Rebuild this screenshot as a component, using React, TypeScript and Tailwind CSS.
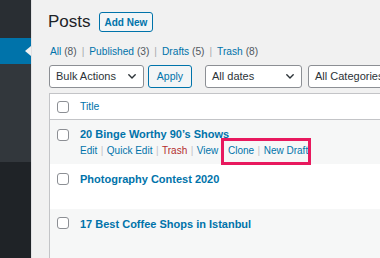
import React from "react";

const Checkbox = () => (
  <span className="block w-[12px] h-[12px] shrink-0 rounded-[3px] border border-[#8c8f94] bg-white" />
);

const Chevron = () => (
  <svg width="8" height="5" viewBox="0 0 8 5" className="shrink-0">
    <path d="M0.8 0.8 L4 4 L7.2 0.8" fill="none" stroke="#2c3338" strokeWidth="1.4" strokeLinecap="round" strokeLinejoin="round" />
  </svg>
);

const Select = ({ label, w, chevron = true }: { label: string; w: string; chevron?: boolean }) => (
  <div className={`${w} h-[23px] shrink-0 flex items-center justify-between pl-[6px] pr-[7px] border border-[#8c8f94] rounded-[3px] bg-white text-[11px] text-[#2c3338] whitespace-nowrap overflow-hidden`}>
    <span>{label}</span>
    {chevron && <Chevron />}
  </div>
);

const Sep = () => <span className="text-[#c3c4c7] mx-[3.5px]">|</span>;
const LinkSep = () => <span className="text-[#a7aaad] mx-[5px]">|</span>;

export default function App() {
  return (
    <div className="w-[380px] h-[258px] overflow-hidden flex bg-[#f1f1f1] font-['Liberation_Sans',Arial,sans-serif]">
      {/* Sidebar */}
      <div className="w-[31px] shrink-0 flex flex-col">
        <div className="h-[38px] bg-[#292e33]" />
        <div className="h-[26px] bg-[#0073aa] relative">
          <span className="absolute right-0 top-[8px] w-0 h-0 border-y-[5px] border-y-transparent border-r-[6px] border-r-[#f1f1f1]" />
        </div>
        <div className="h-[98px] bg-[#32373c]" />
        <div className="flex-1 bg-[#1f2327]" />
      </div>
      <div className="w-px shrink-0 bg-[#e2e2e4]" />

      {/* Main */}
      <div className="flex-1 pl-[17px] pt-[10px] flex flex-col min-w-0">
        <div className="h-[24px] flex items-center">
          <span className="text-[17px] leading-[24px] text-[#1d2327] -ml-[1px]">Posts</span>
          <span className="ml-[8px] h-[20px] px-[5px] flex items-center border border-[#0073aa] rounded-[3px] bg-[#f3f5f6] text-[10px] font-bold text-[#0073aa]">
            Add New
          </span>
        </div>

        <div className="mt-[11px] h-[14px] text-[10.2px] leading-[14px] whitespace-nowrap pl-[1px]">
          <span className="text-[#0073aa]">All</span> <span className="text-[#50575e]">(8)</span>
          <LinkSep />
          <span className="text-[#0073aa]">Published</span> <span className="text-[#50575e]">(3)</span>
          <LinkSep />
          <span className="text-[#0073aa]">Drafts</span> <span className="text-[#50575e]">(5)</span>
          <LinkSep />
          <span className="text-[#0073aa]">Trash</span> <span className="text-[#50575e]">(8)</span>
        </div>

        <div className="mt-[6px] flex items-center">
          <Select label="Bulk Actions" w="w-[95px]" />
          <div className="ml-[4px] w-[44px] h-[23px] shrink-0 flex items-center justify-center border border-[#0073aa] rounded-[3px] bg-[#f3f5f6] text-[10.5px] text-[#0073aa]">
            Apply
          </div>
          <div className="ml-[13px]">
            <Select label="All dates" w="w-[97px]" />
          </div>
          <div className="ml-[6px]">
            <Select label="All Categories" w="w-[110px]" chevron={false} />
          </div>
        </div>

        {/* Table */}
        <div className="mt-[5px] w-[400px] border border-[#c3c4c7] bg-white">
          <div className="h-[26px] flex items-center pl-[7px] border-b border-[#c3c4c7]">
            <Checkbox />
            <span className="ml-[11px] text-[10.5px] text-[#0073aa]">Title</span>
          </div>

          <div className="relative h-[44px] bg-[#f6f7f7] flex pl-[7px]">
            <div className="pt-[9px]"><Checkbox /></div>
            <div className="ml-[11px] pt-[7px]">
              <div className="text-[11px] leading-[14px] font-bold text-[#0073aa] whitespace-nowrap">20 Binge Worthy 90’s Shows</div>
              <div className="mt-[3px] text-[10px] leading-[14px] text-[#0073aa] whitespace-nowrap">
                Edit<Sep />Quick Edit<Sep /><span className="text-[#b32d2e]">Trash</span><Sep />View<Sep />Clone<Sep />New Draft
              </div>
            </div>
            <span className="absolute left-[171px] top-[18px] w-[90px] h-[27px] border-[3px] border-[#e8195e]" />
          </div>

          <div className="h-[45px] bg-white flex pl-[7px]">
            <div className="pt-[9px]"><Checkbox /></div>
            <div className="ml-[11px] pt-[8px] text-[11px] leading-[14px] font-bold text-[#0073aa] whitespace-nowrap">Photography Contest 2020</div>
          </div>

          <div className="h-[50px] bg-[#f6f7f7] flex pl-[7px]">
            <div className="pt-[8px]"><Checkbox /></div>
            <div className="ml-[11px] pt-[8px] text-[11px] leading-[14px] font-bold text-[#0073aa] whitespace-nowrap">17 Best Coffee Shops in Istanbul</div>
          </div>
        </div>
      </div>
    </div>
  );
}
